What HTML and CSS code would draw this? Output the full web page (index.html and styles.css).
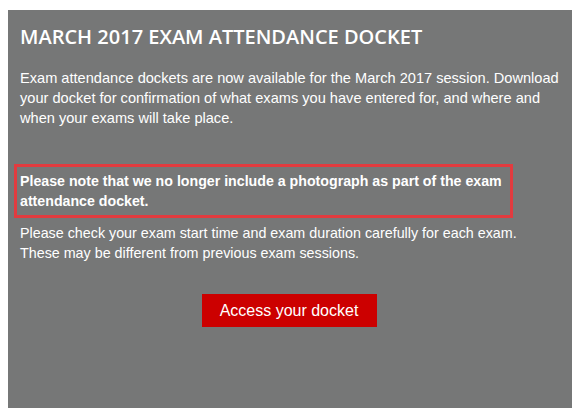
FILE: index.html
```html
<!DOCTYPE html>
<html>

<head>
    <title>March 2017 Exam Attendance Docket</title>
    <meta charset="UTF-8">
    <link rel="stylesheet" href="styles.css">
</head>

<body>
    <div class="panel">
        <h1 class="panel-title">MARCH 2017 EXAM ATTENDANCE DOCKET</h1>
        <p class="intro">
            Exam attendance dockets are now available for the March 2017 session. Download<br>
            your docket for confirmation of what exams you have entered for, and where and<br>
            when your exams will take place.
        </p>
        <div class="notice">
            Please note that we no longer include a photograph as part of the exam<br>
            attendance docket.
        </div>
        <p class="check">
            Please check your exam start time and exam duration carefully for each exam.<br>
            These may be different from previous exam sessions.
        </p>
        <div class="actions">
            <a href="#" class="docket-button">Access your docket</a>
        </div>
    </div>
</body>

</html>
```

FILE: styles.css
```css
body {
    margin: 10px 9px 9px 8px;
    background-color: #ffffff;
    font-family: "Liberation Sans", Arial, sans-serif;
}

.panel {
    height: 398px;
    box-sizing: border-box;
    padding: 14px 12px 0 12px;
    background-color: #767777;
    color: #ffffff;
}

.panel-title {
    margin: 0 0 18px 0;
    font-family: "Open Sans", sans-serif;
    font-size: 20px;
    font-weight: 600;
    line-height: 26px;
}

.intro {
    margin: 0 0 36px 0;
    font-size: 14.6px;
    line-height: 20px;
    white-space: nowrap;
}

.notice {
    width: 499px;
    box-sizing: border-box;
    margin: 0 0 0 -6px;
    padding: 4px 3px;
    border: 3px solid #e23b3f;
    font-size: 14.2px;
    font-weight: bold;
    line-height: 20px;
    white-space: nowrap;
}

.check {
    margin: 5px 0 0 0;
    font-size: 14.3px;
    line-height: 20px;
    white-space: nowrap;
}

.actions {
    display: flex;
    justify-content: center;
    margin-top: 31px;
    padding-right: 2px;
}

.docket-button {
    display: block;
    width: 175px;
    height: 33px;
    background-color: #cc0000;
    color: #ffffff;
    font-size: 16px;
    line-height: 33px;
    text-align: center;
    text-decoration: none;
}
```
